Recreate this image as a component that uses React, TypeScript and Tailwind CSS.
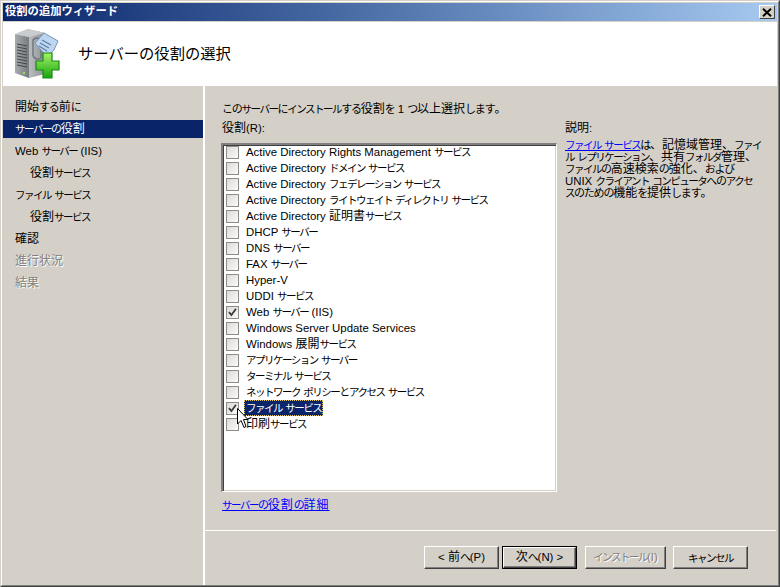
const roles: [string, boolean][] = [
  ['Active Directory Rights Management サービス', false],
  ['Active Directory ドメイン サービス', false],
  ['Active Directory フェデレーション サービス', false],
  ['Active Directory ライトウェイト ディレクトリ サービス', false],
  ['Active Directory 証明書サービス', false],
  ['DHCP サーバー', false],
  ['DNS サーバー', false],
  ['FAX サーバー', false],
  ['Hyper-V', false],
  ['UDDI サービス', false],
  ['Web サーバー (IIS)', true],
  ['Windows Server Update Services', false],
  ['Windows 展開サービス', false],
  ['アプリケーション サーバー', false],
  ['ターミナル サービス', false],
  ['ネットワーク ポリシーとアクセス サービス', false],
  ['ファイル サービス', true],
  ['印刷サービス', false],
];

const nav: { t: string; indent?: boolean; active?: boolean; off?: boolean }[] = [
  { t: '開始する前に' },
  { t: 'サーバーの役割', active: true },
  { t: 'Web サーバー (IIS)' },
  { t: '役割サービス', indent: true },
  { t: 'ファイル サービス' },
  { t: '役割サービス', indent: true },
  { t: '確認' },
  { t: '進行状況', off: true },
  { t: '結果', off: true },
];

// The reference's bitmap UI font has narrow kana and wide kanji, so each script gets its own run.
function T({ children }: { children: string }) {
  const runs = children.match(/[\u3040-\u309f]+|[\u30a0-\u30ff]+|[\u3000-\u303f\u3400-\u9fff]+|[^\u3000-\u30ff\u3400-\u9fff]+/g) ?? [];
  return (
    <>
      {runs.map((r, i) => {
        const c = r.charCodeAt(0);
        const cls =
          c >= 0x3040 && c <= 0x309f
            ? 'text-[11px] tracking-[-1.2px]'
            : c >= 0x30a0 && c <= 0x30ff
              ? 'text-[10.5px] tracking-[-1.5px]'
              : c >= 0x3000
                ? 'text-[12px]'
                : 'text-[11.4px]';
        return (
          <span key={i} className={cls}>
            {r}
          </span>
        );
      })}
    </>
  );
}

function Check({ on }: { on: boolean }) {
  return (
    <span className="w-[13px] h-[13px] shrink-0 border border-[#8e8c86] bg-gradient-to-br from-[#dcdad5] to-[#fbfbfa] flex items-center justify-center">
      {on && (
        <svg width="11" height="11" viewBox="0 0 11 11">
          <path d="M2 5.2 L4.4 8 L9 1.8" fill="none" stroke="#3c3c3c" strokeWidth="1.8" />
        </svg>
      )}
    </span>
  );
}

function Btn({ children, primary, off }: { children: string; primary?: boolean; off?: boolean }) {
  const bevel = 'border-t-[#ffffff] border-l-[#ffffff] border-r-[#404040] border-b-[#404040]';
  return (
    <div className={primary ? 'border border-black' : ''}>
      <div
        className={`${primary ? 'w-[73px] h-[21px]' : off ? 'w-[81px] h-[23px]' : 'w-[75px] h-[23px]'} border ${bevel} bg-[#d4d0c8] shadow-[inset_-1px_-1px_0_#808080] flex items-center justify-center whitespace-nowrap text-xs ${off ? 'text-[#808080] [text-shadow:1px_1px_0_#fff]' : 'text-black'}`}
      >
        <span>
          <T>{children}</T>
        </span>
      </div>
    </div>
  );
}

function WizardIcon() {
  return (
    <svg width="50" height="52" viewBox="0 0 50 52">
      <defs>
        <linearGradient id="front" x1="0" x2="1">
          <stop offset="0" stopColor="#a7abae" />
          <stop offset="1" stopColor="#767b80" />
        </linearGradient>
        <linearGradient id="side" x1="0" x2="1">
          <stop offset="0" stopColor="#e2e4e6" />
          <stop offset="1" stopColor="#8c9195" />
        </linearGradient>
        <linearGradient id="plus" x1="0" x2="0" y1="0" y2="1">
          <stop offset="0" stopColor="#a6f266" />
          <stop offset="1" stopColor="#17a510" />
        </linearGradient>
      </defs>
      <path d="M1 6 L14 1 L31 5 L31 46 L15 50 L1 45 Z" fill="url(#side)" />
      <path d="M1 6 L15 9 L15 50 L1 45 Z" fill="url(#front)" />
      <path d="M1 6 L14 1 L31 5 L15 9 Z" fill="#c9ccce" />
      <path d="M3 16 L13 18 M3 19 L13 21 M3 22 L13 24 M3 25 L13 27 M3 28 L13 30 M3 31 L13 33 M3 34 L13 36 M3 37 L13 39" stroke="#43484c" strokeWidth="1.2" />
      <rect x="9" y="44" width="2" height="2" fill="#9be04e" />
      <path d="M19 12 a5 5 0 0 1 8 0 l0 18 a5 5 0 0 1 -8 -3 Z" fill="none" stroke="#6e7478" strokeWidth="1.4" />
      <path d="M21 15 L30 5 L44 13 L40 22 L33 29 Z" fill="#bcd5f0" stroke="#7896b8" strokeWidth="1" />
      <path d="M28 12 L37 17 M26 15 L35 20 M25 18 L33 23" stroke="#5f7ea6" strokeWidth="1.2" />
      <path d="M29 25 h9 v8 h7 v9 h-7 v8 h-9 v-8 h-7 v-9 h7 Z" fill="url(#plus)" stroke="#168a10" strokeWidth="1.2" />
    </svg>
  );
}

export default function App() {
  return (
    <div className="w-[780px] h-[587px] overflow-hidden relative border-t border-l border-[#d4d0c8] border-r border-r-[#404040] border-b border-b-[#404040] bg-[#d4d0c8] font-['Liberation_Sans','Noto_Sans_CJK_JP',sans-serif] text-xs text-black">
      <div className="h-[585px] border-t border-l border-white border-r border-r-[#808080] border-b border-b-[#808080] pt-px pl-px pr-px flex flex-col">
        {/* title bar */}
        <div className="h-[18px] shrink-0 bg-gradient-to-r from-[#0a246a] to-[#a6caf0] flex items-center justify-between pl-[2px] pr-[2px]">
          <span className="text-white font-bold text-[11.3px] leading-none">役割の追加ウィザード</span>
          <div className="w-4 h-[14px] bg-[#d4d0c8] border border-t-white border-l-white border-r-[#404040] border-b-[#404040] flex items-center justify-center">
            <svg width="10" height="9" viewBox="0 0 10 9">
              <path d="M1 0.8 L9 8.2 M9 0.8 L1 8.2" stroke="#000" strokeWidth="2" />
            </svg>
          </div>
        </div>
        {/* header */}
        <div className="h-[64px] shrink-0 mt-px bg-white flex items-center pl-[11px]">
          <WizardIcon />
          <span className="ml-[14px] text-[15.3px] leading-none">サーバーの役割の選択</span>
        </div>
        {/* body */}
        <div className="flex flex-1 min-h-0">
          <div className="w-[200px] shrink-0 pt-3 flex flex-col gap-1">
            {nav.map((n, i) => (
              <div
                key={i}
                className={`h-[18px] flex items-center whitespace-pre ${n.indent ? 'pl-[27px]' : 'pl-3'} ${n.active ? 'bg-[#0a246a] text-white' : ''} ${n.off ? 'text-[#808080] [text-shadow:1px_1px_0_#fff]' : ''}`}
              >
                <span>
                  <T>{n.t}</T>
                </span>
              </div>
            ))}
          </div>
          <div className="w-[2px] shrink-0 bg-white" />
          <div className="flex-1 flex flex-col min-w-0">
            <div className="h-[444px] shrink-0 pl-4 flex flex-col">
              <div className="pt-[15px] h-[33px] pl-px leading-4 whitespace-pre">
                <T>このサーバーにインストールする役割を 1 つ以上選択します。</T>
              </div>
              <div className="flex">
                <div className="w-[336px] shrink-0">
                  <div className="h-[24px] pl-px leading-4 pt-[1px]">
                    <T>役割(R):</T>
                  </div>
                  <div className="h-[349px] bg-white border-t-2 border-l-2 border-r border-b border-t-[#808080] border-l-[#808080] border-r-white border-b-white shadow-[inset_1px_1px_0_#404040,inset_-1px_-1px_0_#d4d0c8] pl-[3px]">
                    <div className="-mt-px">
                      {roles.map(([t, on]) => {
                        const sel = t === 'ファイル サービス';
                        return (
                          <div key={t} className="h-4 flex items-center">
                            <Check on={on} />
                            {sel ? (
                              <span className="ml-[5px] h-4 leading-[14px] px-px bg-[#0a246a] text-white border border-dotted border-[#e8c860] whitespace-pre">
                                <T>{t}</T>
                              </span>
                            ) : (
                              <span className="ml-[7px] leading-4 whitespace-pre">
                                <T>{t}</T>
                              </span>
                            )}
                          </div>
                        );
                      })}
                    </div>
                  </div>
                </div>
                <div className="ml-2 w-[210px]">
                  <div className="h-[16px] leading-4 pt-[1px]">
                    <T>説明:</T>
                  </div>
                  <div className="mt-[4px] whitespace-pre [&>div]:h-3 [&>div]:leading-3">
                    <div>
                      <span className="text-[#0000ff] underline">
                        <T>ファイル サービス</T>
                      </span>
                      <T>は、記憶域管理、ファイ</T>
                    </div>
                    <div>
                      <T>ル レプリケーション、共有フォルダ管理、</T>
                    </div>
                    <div>
                      <T>ファイルの高速検索の強化、および</T>
                    </div>
                    <div>
                      <T>UNIX クライアント コンピュータへのアクセ</T>
                    </div>
                    <div>
                      <T>スのための機能を提供します。</T>
                    </div>
                  </div>
                </div>
              </div>
              <div className="mt-[5px] pl-[1px] leading-4 tracking-[1px] text-[#0000ff] underline whitespace-pre">
                <T>サーバーの役割の詳細</T>
              </div>
            </div>
            <div className="h-px shrink-0 bg-white mr-px" />
            <div className="flex-1 flex justify-end items-start pt-[15px] pr-[29px]">
              <Btn>{'< 前へ(P)'}</Btn>
              <div className="w-[3px]" />
              <Btn primary>{'次へ(N) >'}</Btn>
              <div className="w-[8px]" />
              <Btn off>インストール(I)</Btn>
              <div className="w-[7px]" />
              <Btn>キャンセル</Btn>
            </div>
          </div>
        </div>
      </div>
      {/* mouse pointer */}
      <svg className="absolute left-[236px] top-[407px]" width="12" height="22" viewBox="0 0 12 22">
        <path d="M0.5 0.5 V16 L4 12.5 L7 19.5 L9 18.5 L6.5 11.5 H11 Z" fill="#fff" stroke="#000" strokeWidth="1" />
      </svg>
    </div>
  );
}
